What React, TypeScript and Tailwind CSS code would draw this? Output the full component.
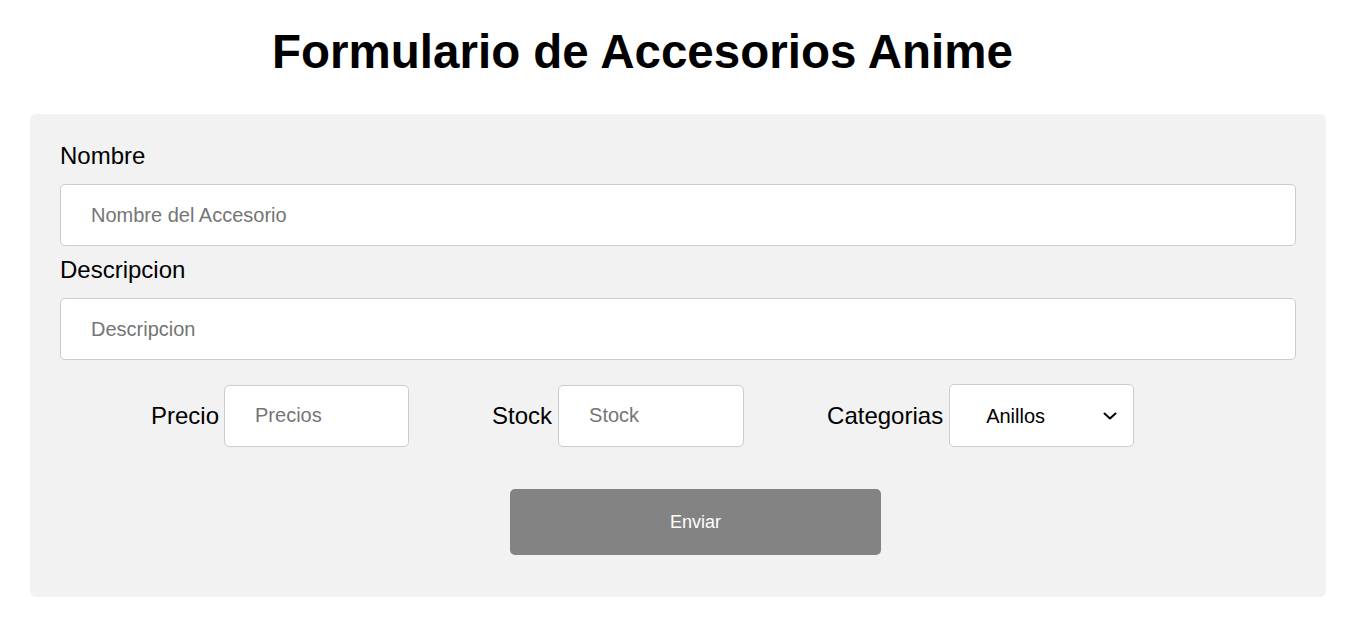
import React from "react";

const font = { fontFamily: '"Liberation Sans", Arial, sans-serif' };

function Chevron() {
  return (
    <svg
      className="pointer-events-none absolute right-[17px] top-1/2 -translate-y-1/2"
      width="14"
      height="8"
      viewBox="0 0 14 8"
      fill="none"
    >
      <path d="M1.5 1.5 L7 6.5 L12.5 1.5" stroke="#000" strokeWidth="2" strokeLinecap="round" strokeLinejoin="round" />
    </svg>
  );
}

export default function App() {
  return (
    <div className="min-h-[633px] w-full bg-white text-black font-['Liberation_Sans',Arial,sans-serif]" style={font}>
      <div className="flex justify-center pr-[78px] pt-[24px]">
        <h1 className="text-[47.5px] font-bold leading-[55px]">Formulario de Accesorios Anime</h1>
      </div>
      <form
        className="ml-[30px] mt-[35px] w-[1296px] rounded-[6px] bg-[#f2f2f2] px-[30px] pt-[28px] pb-[42px]"
        onSubmit={(e) => e.preventDefault()}
      >
        <label className="block h-[28px] text-[24px] leading-[28px]">Nombre</label>
        <input
          type="text"
          placeholder="Nombre del Accesorio"
          className="mt-[14px] block h-[62px] w-full rounded-[5px] border border-[#cccccc] bg-white px-[30px] text-[20px] outline-none placeholder:text-[#757575]"
        />
        <label className="mt-[10px] block h-[28px] text-[24px] leading-[28px]">Descripcion</label>
        <input
          type="text"
          placeholder="Descripcion"
          className="mt-[14px] block h-[62px] w-full rounded-[5px] border border-[#cccccc] bg-white px-[30px] text-[20px] outline-none placeholder:text-[#757575]"
        />
        <div className="mt-[24px] flex items-center gap-[83px] pl-[91px]">
          <div className="flex items-center gap-[5px]">
            <label className="text-[24px] leading-[28px]">Precio</label>
            <input
              type="text"
              placeholder="Precios"
              className="h-[62px] w-[185px] rounded-[5px] border border-[#cccccc] bg-white px-[30px] text-[20px] outline-none placeholder:text-[#757575]"
            />
          </div>
          <div className="flex items-center gap-[6px]">
            <label className="text-[24px] leading-[28px]">Stock</label>
            <input
              type="text"
              placeholder="Stock"
              className="h-[62px] w-[186px] rounded-[5px] border border-[#cccccc] bg-white px-[30px] text-[20px] outline-none placeholder:text-[#757575]"
            />
          </div>
          <div className="flex items-center gap-[6px]">
            <label className="text-[24px] leading-[28px]">Categorias</label>
            <div className="relative">
              <select
                defaultValue="Anillos"
                className="block h-[63px] w-[185px] appearance-none rounded-[5px] border border-[#cccccc] bg-white pl-[36px] pr-[30px] text-[20px] text-black outline-none"
              >
                <option>Anillos</option>
                <option>Collares</option>
                <option>Pulseras</option>
              </select>
              <Chevron />
            </div>
          </div>
        </div>
        <button
          type="submit"
          className="ml-[450px] mt-[42px] block h-[66px] w-[371px] rounded-[5px] bg-[#838383] text-[18px] text-white"
        >
          Enviar
        </button>
      </form>
    </div>
  );
}
